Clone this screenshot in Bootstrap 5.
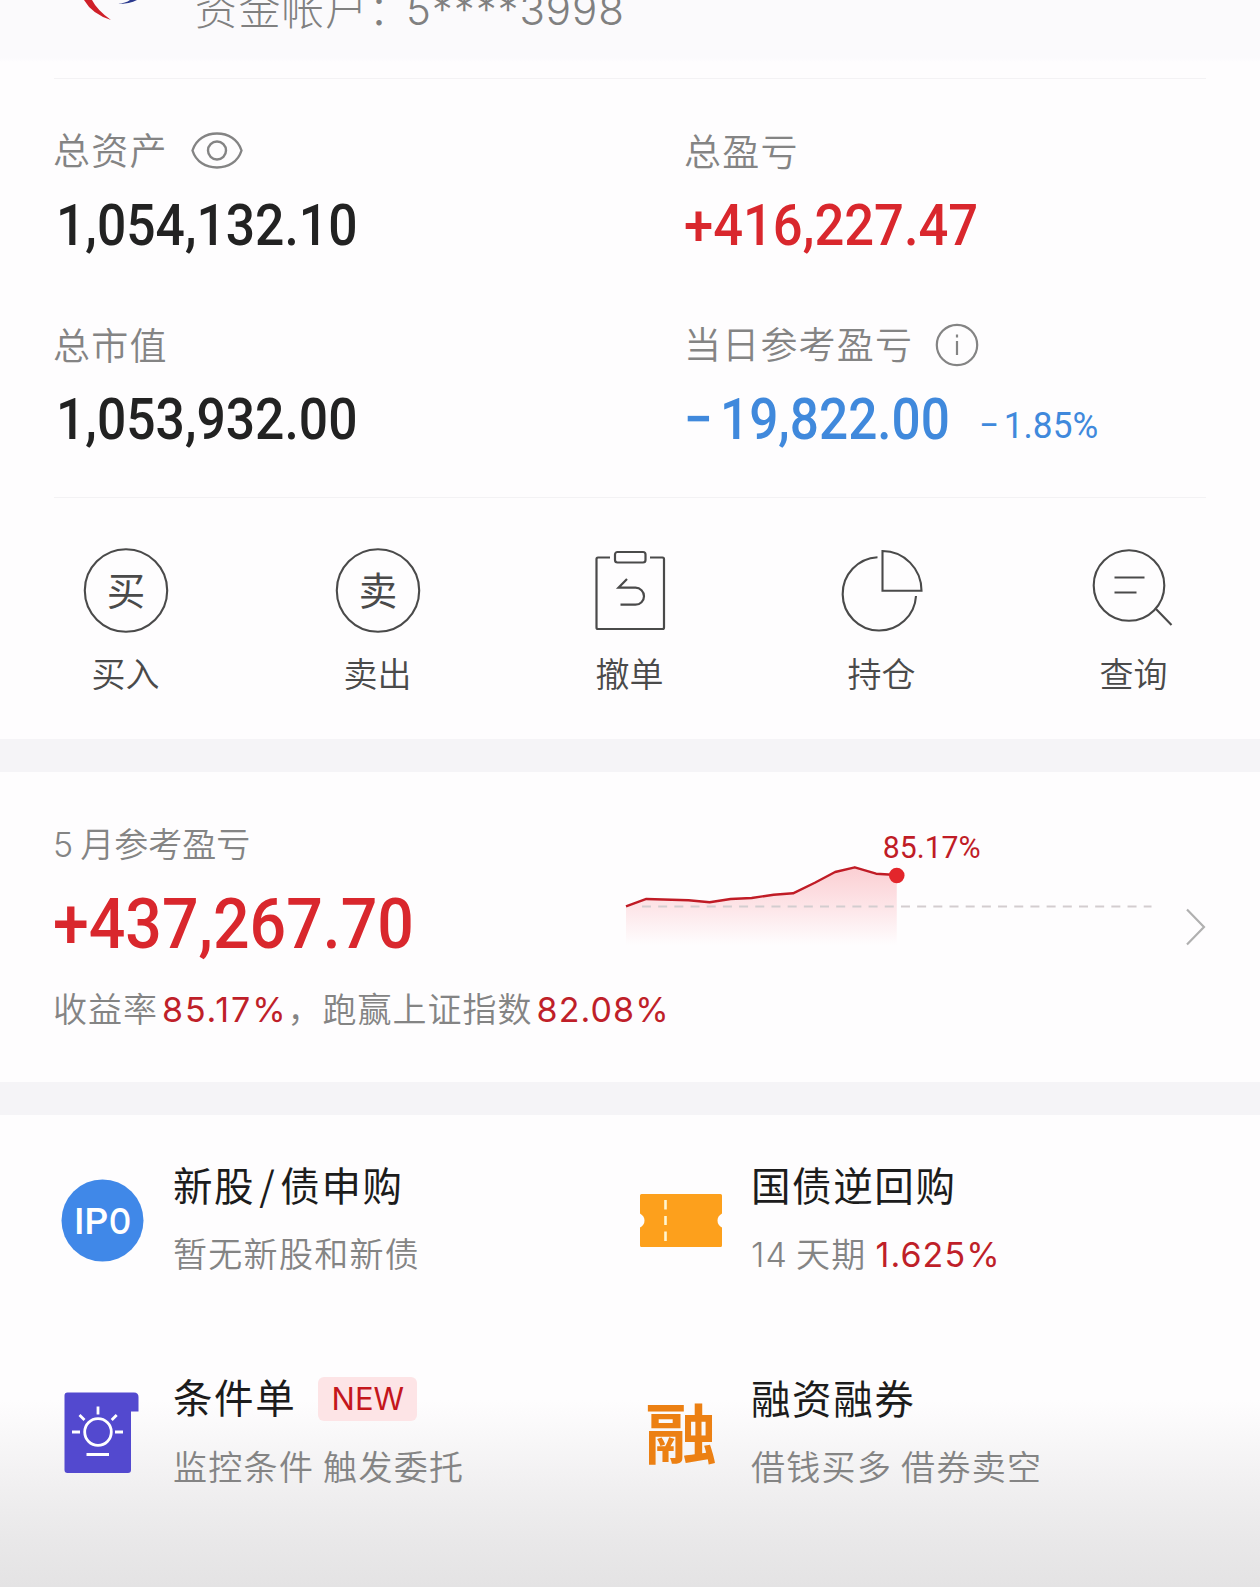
<!DOCTYPE html>
<html lang="zh-CN">
<head>
<meta charset="utf-8">
<meta name="viewport" content="width=device-width, initial-scale=1">
<title>资金帐户</title>
<link href="https://cdn.jsdelivr.net/npm/bootstrap@5.3.0/dist/css/bootstrap.min.css" rel="stylesheet">
<style>
  body { background: #fefdfe; color: #222; font-family: Inter, "Noto Sans CJK SC", sans-serif; overflow: hidden; }
  .phone { width: 1260px; height: 1587px; overflow: hidden; }
  .cjk { font-family: "Noto Sans CJK SC", sans-serif; }
  .acct-head { height: 78px; background: linear-gradient(#fbfafc, #fbfafc 58px, #fefdfe 62px); padding-left: 80px; }
  .acct-logo { width: 64px; height: 24px; }
  .acct-text { margin: -14px 0 0 51px; font-size: 42px; line-height: 42px; font-weight: 300; color: #808080; letter-spacing: 1.4px; font-family: "Noto Sans CJK SC", sans-serif; }
  .acct-num { font-family: Inter, sans-serif; letter-spacing: .9px; margin-left: -6px; }
  .rule { height: 1px; margin: 0 54px; background: #f3f2f4; }
  .assets { padding: 48px 0 49px 53px; }
  .col-a { width: 631px; }
  .lbl { height: 44px; line-height: 46px; font-size: 37px; letter-spacing: 1.2px; color: #848484; font-weight: 350; font-family: "Noto Sans CJK SC", sans-serif; white-space: nowrap; }
  .din { display: inline-block; font-family: Roboto, sans-serif; font-weight: 500; transform-origin: 0 50%; white-space: nowrap; }
  .amt { height: 60px; line-height: 60px; margin-top: 23px; font-size: 58px; }
  .amt .din { transform: scaleX(.89); letter-spacing: 0; }
  .amt .bk { margin-left: 3px; }
  .amt.rd .din { transform: scaleX(.905); }
  .amt.bl { display: flex; line-height: 62px; }
  .amt.bl .din { transform: scaleX(.885); }
  .minus { margin-right: 8px; }
  .gap-row { margin-top: 67px; }
  .rd { color: #d9272d; }
  .rd-d { color: #bf1f29; }
  .bl { color: #4089dc; }
  .amt.bl .pct { font-size: 37px; font-weight: 400; margin-left: -5px; line-height: 75px; height: 60px; transform: scaleX(.95); }
  .pct .minus { margin-right: 5px; }
  .eye { margin-left: 23px; }
  .info { margin-left: 22px; }
  .acts { padding: 48px 0 46px; }
  .act-ic { width: 90px; height: 90px; display: block; margin: 0 auto; }
  .act-lb { margin-top: 13px; height: 44px; line-height: 47px; font-size: 34px; color: #4a4a4a; font-weight: 350; margin-left: -1px; }
  .band { height: 33px; background: #f5f4f7; }
  .month { height: 310px; padding: 48px 53px 0; }
  .lbl-s { font-size: 34px; letter-spacing: 0; }
  .five { margin-right: 7px; }
  .big { height: 80px; line-height: 80px; margin-top: 19px; font-size: 70px; }
  .big .din { transform: scaleX(.92); }
  .month-l { width: 567px; }
  .chart { width: 540px; height: 130px; margin-top: 5px; }
  .chev { width: 22px; height: 40px; margin: 87px 0 0 26px; }
  .note { margin-top: 22px; letter-spacing: 1px; }
  .lat { font-family: Inter, sans-serif; font-weight: 400; letter-spacing: 0; }
  .fig { letter-spacing: 1.1px; }
  .fig-w { letter-spacing: 1.9px; }
  .feat { padding: 42px 0 0 58px; height: 472px; background: linear-gradient(#fefdfe, #fefdfe 285px, #f8f7f8 325px, #f0eff0 375px, #e9e8e9 425px, #e4e3e4 472px); }
  .item { height: 116px; }
  .item-l { width: 578px; }
  .feat-row + .feat-row { margin-top: 97px; }
  .item-ic { width: 90px; height: 90px; margin: 10px 25px 0 0; flex: none; overflow: visible; }
  .ttl { height: 50px; line-height: 53px; font-size: 39.5px; letter-spacing: 1.6px; color: #1c1c1c; font-weight: 400; font-family: "Noto Sans CJK SC", sans-serif; white-space: nowrap; }
  .sub { margin-top: 22px; height: 44px; line-height: 47px; font-size: 34px; letter-spacing: 1.3px; color: #848484; font-weight: 350; font-family: "Noto Sans CJK SC", sans-serif; white-space: nowrap; }
  .new-tag { width: 99px; height: 44px; margin: 7px 0 0 22px; border-radius: 6px; background: #fde4e6; color: #c4161c; font: 400 31px/44px Inter, sans-serif; letter-spacing: 0; text-align: center; }
</style>
</head>
<body>
<main class="phone">
  <header class="acct-head d-flex align-items-start overflow-hidden">
    <svg class="acct-logo" viewBox="0 0 64 24"><path d="M4 0Q12 14 31 20Q17 10 12 0Z" fill="#cf2029"/><path d="M57 0Q50 4 37 4Q46 3 50 0Z" fill="#2b3a8e"/></svg>
    <div class="acct-text text-nowrap">资金帐户：<span class="acct-num">5****3998</span></div>
  </header>
  <div class="rule"></div>

  <section class="assets">
    <div class="d-flex">
      <div class="col-a">
        <div class="lbl d-flex align-items-center"><span>总资产</span>
          <svg width="52" height="44" viewBox="0 0 52 44" class="eye" fill="none" stroke="#848484" stroke-width="2.4"><path d="M1.500 23.500C5 12 15 6.500 26 6.500S47 12 50.500 23.500C47 35 37 40.500 26 40.500S5 35 1.500 23.500Z"/><circle cx="26" cy="23.500" r="9"/></svg>
        </div>
        <div class="amt"><span class="din bk">1,054,132.10</span></div>
      </div>
      <div>
        <div class="lbl">总盈亏</div>
        <div class="amt rd"><span class="din">+416,227.47</span></div>
      </div>
    </div>
    <div class="d-flex gap-row">
      <div class="col-a">
        <div class="lbl">总市值</div>
        <div class="amt"><span class="din bk">1,053,932.00</span></div>
      </div>
      <div>
        <div class="lbl d-flex align-items-center"><span>当日参考盈亏</span>
          <svg width="44" height="46" viewBox="0 0 44 46" class="info mt-1" fill="none" stroke="#848484" stroke-width="2.2"><circle cx="22" cy="23" r="20.200"/><path d="M22 19V33M22 12.500V15.500"/></svg>
        </div>
        <div class="amt bl text-nowrap"><span class="din"><span class="minus">−</span>19,822.00</span><span class="din pct"><span class="minus">−</span>1.85%</span></div>
      </div>
    </div>
  </section>
  <div class="rule"></div>

  <nav class="acts row g-0 text-center cjk">
    <div class="col"><svg class="act-ic" viewBox="0 0 90 90"><circle cx="45" cy="44.500" r="41.200" fill="none" stroke="#4a4a4a" stroke-width="2.1"/><text x="45" y="59" font-size="38.500" text-anchor="middle" fill="#4a4a4a">买</text></svg><div class="act-lb">买入</div></div>
    <div class="col"><svg class="act-ic" viewBox="0 0 90 90"><circle cx="45" cy="44.500" r="41.200" fill="none" stroke="#4a4a4a" stroke-width="2.1"/><text x="45" y="59" font-size="38.500" text-anchor="middle" fill="#4a4a4a">卖</text></svg><div class="act-lb">卖出</div></div>
    <div class="col"><svg class="act-ic" viewBox="0 0 90 90" fill="none" stroke="#4a4a4a" stroke-width="2.2"><path d="M25 11.500H13Q11.500 11.500 11.500 13V81.500Q11.500 83 13 83H77.500Q79 83 79 81.500V13Q79 11.500 77.500 11.500H65"/><rect x="30" y="6" width="30.500" height="10.500" rx="2.500"/><path d="M42 33L33.500 41.700H50.500A8.500 8.500 0 0 1 50.500 58.700H35.500"/></svg><div class="act-lb">撤单</div></div>
    <div class="col"><svg class="act-ic" viewBox="0 0 90 90" fill="none" stroke="#4a4a4a" stroke-width="2.1"><path d="M45.500 5V44.700H84.500A39 39.700 0 0 0 45.500 5Z"/><path d="M40.500 11.200A36.700 36.700 0 1 0 79 50"/></svg><div class="act-lb">持仓</div></div>
    <div class="col"><svg class="act-ic" viewBox="0 0 90 90" fill="none" stroke="#4a4a4a" stroke-width="2.1"><circle cx="40" cy="39.500" r="35.300"/><path d="M67 63L82.500 79M25.500 31.500H55.500M25.500 46.500H47.500"/></svg><div class="act-lb">查询</div></div>
  </nav>
  <div class="band"></div>

  <section class="month">
    <div class="d-flex align-items-start">
      <div class="month-l">
        <div class="lbl lbl-s"><span class="lat fw-light five">5</span>月参考盈亏</div>
        <div class="big rd"><span class="din">+437,267.70</span></div>
      </div>
      <svg class="chart" viewBox="620 825 540 130">
        <defs><linearGradient id="fade" gradientUnits="userSpaceOnUse" x1="0" y1="866" x2="0" y2="945"><stop offset="0" stop-color="#fbced2"/><stop offset=".5" stop-color="#fde4e7"/><stop offset="1" stop-color="#fefdfe"/></linearGradient></defs>
        <path d="M626 906.500L646.400 899L688.600 900.300L709.700 902.300L730.700 899L751.800 898L773.800 894.700L793.200 893.300L815 882.700L835.300 872L855 867.300L876.300 873.700L897 875V945H626Z" fill="url(#fade)"/>
        <path d="M642 906.500H1152" stroke="#d3cdcf" stroke-width="2" stroke-dasharray="9 7.200"/>
        <path d="M626 906.500L646.400 899L688.600 900.300L709.700 902.300L730.700 899L751.800 898L773.800 894.700L793.200 893.300L815 882.700L835.300 872L855 867.300L876.300 873.700L897 875" fill="none" stroke="#c01c26" stroke-width="2.400" stroke-linejoin="round"/>
        <circle cx="897" cy="875.500" r="7.800" fill="#e3262b"/>
        <text x="883" y="858" font-family="Roboto" font-size="32" fill="#c01c26" textLength="98" lengthAdjust="spacingAndGlyphs">85.17%</text>
      </svg>
      <svg class="chev" viewBox="0 0 22 40" fill="none" stroke="#b0b0b0" stroke-width="2.200"><path d="M2 2.500L19 20L2 37.500"/></svg>
    </div>
    <div class="lbl lbl-s note">收益率<span class="lat fig-w rd-d ms-1">85.17%</span>，跑赢上证指数<span class="lat fig rd-d ms-1">82.08%</span></div>
  </section>
  <div class="band"></div>

  <section class="feat">
    <div class="d-flex feat-row">
      <div class="item item-l d-flex align-items-center">
        <svg class="item-ic" viewBox="0 0 90 90"><circle cx="44.500" cy="45.500" r="41" fill="#4088e8"/><g font-family="Roboto" font-weight="500" font-size="37" fill="#fff"><text x="16" y="59">IP</text><text x="51" y="59" textLength="22" lengthAdjust="spacingAndGlyphs">O</text></g></svg>
        <div><div class="ttl">新股<span class="mx-1">/</span>债申购</div><div class="sub">暂无新股和新债</div></div>
      </div>
      <div class="item d-flex align-items-center">
        <svg class="item-ic" viewBox="0 0 90 90"><path d="M5.500 19H84.500Q86 19 86 20.500V38.500Q81.500 41 81.500 45.500T86 52.500V70.500Q86 72 84.500 72H5.500Q4 72 4 70.500V52.500Q8.500 50 8.500 45.500T4 38.500V20.500Q4 19 5.500 19Z" fill="#fda01c"/><path d="M29.500 25V34.500M29.500 41V50M29.500 56.500V66" stroke="#fff6cf" stroke-width="2.600"/></svg>
        <div><div class="ttl">国债逆回购</div><div class="sub"><span class="lat fig fw-light me-2">14</span>天期 <span class="lat fig rd-d">1.625%</span></div></div>
      </div>
    </div>
    <div class="d-flex feat-row">
      <div class="item item-l d-flex align-items-center">
        <svg class="item-ic" viewBox="0 0 90 90" fill="none"><path d="M9.500 4.500H76Q80.500 4.500 80.500 9V23.500H73V82Q73 85 70 85H9.500Q6.500 85 6.500 82V7.500Q6.500 4.500 9.500 4.500Z" fill="#5349cf"/><g stroke="#fff" stroke-width="2.800"><circle cx="40" cy="44" r="13.300"/><path d="M40 18.500V26.500M14 44H22M57 44H65M21.500 27L26.500 32M58.700 27L53.700 32M28.500 66.500H51"/></g></svg>
        <div><div class="ttl d-flex align-items-center"><span>条件单</span><span class="new-tag">NEW</span></div><div class="sub">监控条件 触发委托</div></div>
      </div>
      <div class="item d-flex align-items-center">
        <svg class="item-ic cjk" viewBox="0 0 90 90"><text x="9" y="70" font-size="65" font-weight="700" fill="#ec8013" textLength="72" lengthAdjust="spacingAndGlyphs">融</text></svg>
        <div><div class="ttl">融资融券</div><div class="sub">借钱买多 借券卖空</div></div>
      </div>
    </div>
  </section>
</main>
<script src="https://cdn.jsdelivr.net/npm/bootstrap@5.3.0/dist/js/bootstrap.bundle.min.js"></script>
</body>
</html>
